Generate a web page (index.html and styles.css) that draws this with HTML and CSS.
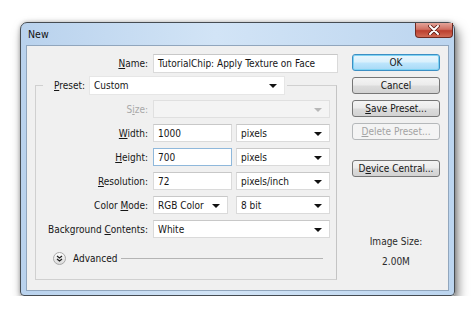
FILE: index.html
```html
<!DOCTYPE html>
<html lang="en">
<head>
  <meta charset="UTF-8" />
  <title>New</title>
  <link rel="stylesheet" href="styles.css">
</head>
<body>
  <div class="window">
    <div class="titlebar">
      <span class="title">New</span>
      <span class="close">
        <svg width="14" height="10" viewBox="0 0 14 10">
          <path d="M3 1 L11 9 M11 1 L3 9" stroke="#5a1a14" stroke-width="3.6" stroke-linecap="round"/>
          <path d="M3 1 L11 9 M11 1 L3 9" stroke="#fff" stroke-width="2" stroke-linecap="round"/>
        </svg>
      </span>
    </div>
    <div class="content">
      <div class="main">
        <div class="name-row">
          <span class="lbl name-lbl"><u>N</u>ame:</span>
          <div class="field name-field">TutorialChip: Apply Texture on Face</div>
        </div>
        <fieldset class="preset">
          <legend>
            <span class="legend-lbl"><u>P</u>reset:</span>
            <div class="field select preset-select">Custom<i class="arrow"></i></div>
          </legend>
          <div class="grid">
            <span class="lbl off">S<u>i</u>ze:</span>
            <div class="field select wide disabled"><i class="arrow"></i></div>

            <span class="lbl"><u>W</u>idth:</span>
            <div class="field">1000</div>
            <div class="field select">pixels<i class="arrow"></i></div>

            <span class="lbl"><u>H</u>eight:</span>
            <div class="field focus">700</div>
            <div class="field select">pixels<i class="arrow"></i></div>

            <span class="lbl"><u>R</u>esolution:</span>
            <div class="field">72</div>
            <div class="field select">pixels/inch<i class="arrow"></i></div>

            <span class="lbl">Color <u>M</u>ode:</span>
            <div class="field select mode">RGB Color<i class="arrow"></i></div>
            <div class="field select">8 bit<i class="arrow"></i></div>

            <span class="lbl">Background <u>C</u>ontents:</span>
            <div class="field select wide">White<i class="arrow"></i></div>
          </div>
          <div class="advanced">
            <span class="adv-btn">
              <svg width="13" height="13" viewBox="0 0 13 13">
                <defs>
                  <linearGradient id="ab" x1="0" y1="0" x2="0" y2="1">
                    <stop offset="0" stop-color="#ffffff"/>
                    <stop offset="1" stop-color="#d9d9d9"/>
                  </linearGradient>
                </defs>
                <circle cx="6.5" cy="6.5" r="6" fill="url(#ab)" stroke="#a8a8a8"/>
                <path d="M4 4 L6.5 6 L9 4 M4 7 L6.5 9 L9 7" fill="none" stroke="#222" stroke-width="1.3"/>
              </svg>
            </span>
            <span class="adv-text">Advanced</span>
            <span class="adv-line"></span>
          </div>
        </fieldset>
      </div>
      <div class="side">
        <div class="btn default">OK</div>
        <div class="btn">Cancel</div>
        <div class="btn"><u>S</u>ave Preset...</div>
        <div class="btn disabled"><u>D</u>elete Preset...</div>
        <div class="btn device">D<u>e</u>vice Central...</div>
        <div class="img-size">
          <div>Image Size:</div>
          <div class="img-val">2.00M</div>
        </div>
      </div>
    </div>
  </div>
</body>
</html>
```

FILE: styles.css
```css
* {
  box-sizing: border-box;
}
body {
  margin: 0;
  background: #fff;
  font-family: "DejaVu Sans Condensed", "DejaVu Sans", sans-serif;
  font-size: 10px;
  color: #161616;
}
u {
  text-decoration: underline;
  text-underline-offset: 1px;
}
.window {
  margin: 22px 0 0 20px;
  width: 435px;
  height: 274px;
  border: 1px solid #464c52;
  border-radius: 7px 7px 4px 4px;
  background: linear-gradient(to right, #b9d2ed, #d2e4f6 45%, #bcd5ef);
  box-shadow: 3px 6px 11px rgba(0,0,0,0.5), 0 0 4px rgba(0,0,0,0.25);
  padding: 0 5px 4px 5px;
  display: flex;
  flex-direction: column;
}
.titlebar {
  height: 22px;
  display: flex;
  align-items: center;
  position: relative;
}
.title {
  padding-left: 2px;
  font-size: 10.5px;
  color: #111;
}
.close {
  position: absolute;
  right: -4px;
  top: 0;
  width: 38px;
  height: 15px;
  border: 1px solid #6e2a22;
  border-top: none;
  border-radius: 0 0 4px 4px;
  background: linear-gradient(#e3a499, #cf7062 45%, #bb3f2f 55%, #d06a55);
  display: flex;
  align-items: center;
  justify-content: center;
}
.content {
  flex: 1;
  background: #f0f0f0;
  border: 1px solid #91a6bd;
  display: flex;
}
.main {
  width: 311px;
  padding-left: 8px;
}
.name-row {
  display: flex;
  align-items: center;
  gap: 5px;
  margin-top: 8px;
}
.lbl {
  text-align: right;
  white-space: nowrap;
}
.name-lbl {
  width: 113px;
}
.field {
  height: 18px;
  background: #fff;
  border: 1px solid #dadada;
  border-top-color: #c8c8c8;
  display: flex;
  align-items: center;
  padding-left: 4px;
  position: relative;
  white-space: nowrap;
}
.name-field {
  width: 185px;
  height: 19px;
}
.field.focus {
  border-color: #8fb8db;
}
.arrow {
  position: absolute;
  right: 7px;
  top: 7px;
  width: 0;
  height: 0;
  border-left: 4px solid transparent;
  border-right: 4px solid transparent;
  border-top: 4px solid #111;
}
.field.disabled {
  background: #f4f4f4;
  border-color: #e0e0e0;
}
.field.disabled .arrow {
  border-top-color: #b8b8b8;
}
.preset {
  margin: 3px 0 0 0;
  padding: 5px 0 14px 0;
  border: 1px solid #d0d0d0;
  border-right-color: #c4c4c4;
  width: 302px;
}
.preset legend {
  margin-left: 7px;
  padding: 0 2px 0 11px;
  display: flex;
  align-items: center;
  gap: 4px;
}
.preset-select {
  width: 196px;
  height: 19px;
  border-color: #e6e6e6;
}
.grid {
  display: grid;
  grid-template-columns: 113px 79px 94px;
  grid-auto-rows: 18px;
  column-gap: 4px;
  row-gap: 6px;
  align-items: center;
}
.grid .lbl {
  padding-right: 1px;
}
.wide {
  grid-column: 2 / 4;
}
.mode {
  width: 75px;
}
.off {
  color: #a8a8a8;
}
.advanced {
  display: flex;
  align-items: center;
  height: 14px;
  margin-top: 13px;
  padding-left: 17px;
}
.adv-btn {
  display: flex;
}
.adv-text {
  margin-left: 7px;
}
.adv-line {
  margin-left: 4px;
  width: 202px;
  height: 1px;
  background: #b4b4b4;
}
.side {
  width: 88px;
  margin-left: 14px;
  padding-top: 8px;
  display: flex;
  flex-direction: column;
  gap: 6px;
}
.btn {
  height: 17px;
  border: 1px solid #767676;
  border-radius: 3px;
  background: linear-gradient(#f4f4f4, #ebebeb 48%, #dcdcdc 52%, #d2d2d2);
  display: flex;
  align-items: center;
  justify-content: center;
  white-space: nowrap;
}
.btn.default {
  border-color: #3c8fc4;
  box-shadow: inset 0 0 0 1px #7fd3f3;
  background: linear-gradient(#eaf6fd, #d9f0fc 48%, #bee6fd 52%, #a7d9f5);
}
.btn.disabled {
  border-color: #b5b8ba;
  background: #f4f4f4;
  color: #a3a3a3;
}
.btn.device {
  margin-top: 14px;
}
.img-size {
  margin-top: 52px;
  text-align: center;
  line-height: 14px;
  color: #2a2a2a;
}
.img-val {
  margin-top: 6px;
}
```
